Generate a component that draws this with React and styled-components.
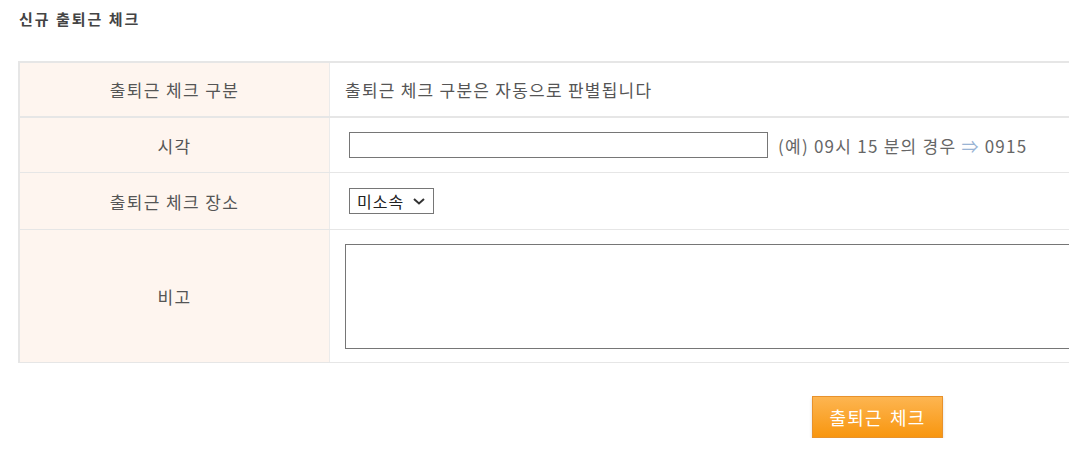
import styled, {createGlobalStyle} from "styled-components";

const GlobalStyle = createGlobalStyle`
    html, body {
        margin: 0;
        padding: 0;
        background: #fff;
        overflow: hidden;
    }

    body {
        font-family: "Noto Sans CJK KR", "Noto Sans", sans-serif;
        color: #555;
    }
`;

const Page = styled.div`
    padding: 8px 0 0 18px;
    width: 1120px;
`;

const Title = styled.h2`
    margin: 0 0 0 1px;
    font-size: 15px;
    font-weight: 700;
    line-height: 22px;
    color: #444;
    letter-spacing: 2px;
`;

const Form = styled.div`
    margin-top: 31px;
    width: 1100px;
    border-left: 2px solid #e6e6e6;
    border-top: 2px solid #e6e6e6;
`;

const Row = styled.div`
    display: grid;
    grid-template-columns: 310px 1fr;
    height: ${p => p.$height}px;
    border-bottom: ${p => p.$thick ? 2 : 1}px solid #e6e6e6;
`;

const Label = styled.div`
    display: flex;
    align-items: center;
    justify-content: center;
    background: #fef5ef;
    border-right: 1px solid #ebebeb;
    font-size: 17px;
    color: #555;
    letter-spacing: 1.4px;
`;

const Cell = styled.div`
    display: flex;
    align-items: center;
    padding-left: 15px;
    font-size: 17px;
    color: #555;
    letter-spacing: 1.25px;
`;

const TextInput = styled.input`
    box-sizing: border-box;
    width: 419px;
    height: 26px;
    margin: 0 0 0 4px;
    border: 1px solid #767676;
    border-radius: 0;
    font-size: 15px;
    font-family: inherit;
`;

const Hint = styled.span`
    margin-left: 10px;
    color: #666;
`;

const Arrow = styled.span`
    color: #9ab4d4;
`;

const SelectWrap = styled.div`
    position: relative;
    display: inline-flex;
    margin-left: 4px;
`;

const Select = styled.select`
    box-sizing: border-box;
    appearance: none;
    height: 26px;
    width: 85px;
    margin: 0;
    border: 1px solid #767676;
    border-radius: 0;
    font-size: 16px;
    font-family: inherit;
    letter-spacing: 1px;
    color: #222;
    background: #fff;
    padding: 0 0 0 7px;
`;

const Chevron = styled.svg`
    position: absolute;
    left: 64px;
    top: 10px;
    width: 12px;
    height: 7px;
    pointer-events: none;
`;

const Memo = styled.textarea`
    box-sizing: border-box;
    width: 760px;
    height: 105px;
    margin: 0;
    border: 1px solid #767676;
    border-radius: 0;
    resize: none;
    font-family: inherit;
`;

const Actions = styled.div`
    display: flex;
    padding: 33px 0 0 794px;
`;

const SubmitButton = styled.button`
    box-sizing: border-box;
    width: 131px;
    height: 42px;
    padding: 0;
    border: 1px solid #e8922c;
    background: linear-gradient(to bottom, #fdb551, #f8960f);
    box-shadow: 0 2px 3px rgba(0, 0, 0, 0.15);
    color: #fff;
    font-family: "Noto Sans CJK KR", sans-serif;
    font-size: 18px;
    letter-spacing: 1.2px;
    word-spacing: 2px;
    cursor: pointer;
`;

export default function App() {
    return (
        <>
            <GlobalStyle/>
            <Page>
                <Title>신규 출퇴근 체크</Title>
                <Form>
                    <Row $height={53} $thick>
                        <Label>출퇴근 체크 구분</Label>
                        <Cell>출퇴근 체크 구분은 자동으로 판별됩니다</Cell>
                    </Row>
                    <Row $height={54}>
                        <Label>시각</Label>
                        <Cell>
                            <TextInput type="text"/>
                            <Hint>(예) 09시 15 분의 경우 <Arrow>⇒</Arrow> 0915</Hint>
                        </Cell>
                    </Row>
                    <Row $height={56}>
                        <Label>출퇴근 체크 장소</Label>
                        <Cell>
                            <SelectWrap>
                                <Select defaultValue="none">
                                    <option value="none">미소속</option>
                                </Select>
                                <Chevron viewBox="0 0 12 7" fill="none">
                                    <path d="M1 1l5 4.5L11 1" stroke="#333" strokeWidth="2"/>
                                </Chevron>
                            </SelectWrap>
                        </Cell>
                    </Row>
                    <Row $height={132}>
                        <Label>비고</Label>
                        <Cell>
                            <Memo/>
                        </Cell>
                    </Row>
                </Form>
                <Actions>
                    <SubmitButton type="button">출퇴근 체크</SubmitButton>
                </Actions>
            </Page>
        </>
    );
}
